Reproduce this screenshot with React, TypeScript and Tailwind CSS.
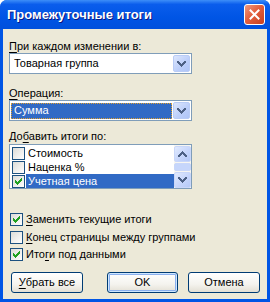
import type { ReactNode } from 'react'

const font = "font-['Liberation_Sans',Arial,sans-serif]"

function Chevron({ up }: { up?: boolean }) {
  return (
    <svg width="9" height="6" viewBox="0 0 9 6" className={up ? 'rotate-180' : ''} shapeRendering="crispEdges">
      <path d="M0 0h2v1h1v1h1v1h1V2h1V1h1V0h2v2H8v1H7v1H6v1H5v1H4V5H3V4H2V3H1V2H0z" fill="#4D6185" />
    </svg>
  )
}

function DropBtn() {
  return (
    <div className="flex h-full w-[17px] items-center justify-center rounded-[2px] border border-[#B9CCF6] bg-[linear-gradient(135deg,#DCE6FD,#BBCEFA_60%,#AFC5F7)]">
      <Chevron />
    </div>
  )
}

function Combo({ text, selected }: { text: string; selected?: boolean }) {
  return (
    <div className="flex h-[21px] w-[183px] border border-[#7F9DB9] bg-white p-[1px]">
      <div className="flex flex-1 items-center pr-[1px]">
        {selected ? (
          <div className="flex h-[16px] flex-1 items-center border border-dotted border-[#E0A030] bg-[#316AC5] pl-[2px] text-white">
            {text}
          </div>
        ) : (
          <div className="pl-[3px]">{text}</div>
        )}
      </div>
      <DropBtn />
    </div>
  )
}

function Check({ on }: { on?: boolean }) {
  return (
    <div className="flex h-[13px] w-[13px] shrink-0 items-center justify-center border border-[#1C5180] bg-[linear-gradient(135deg,#DCDCD7,#FFFFFF)]">
      {on && (
        <svg width="7" height="7" viewBox="0 0 7 7" shapeRendering="crispEdges">
          <path d="M0 2h1v1h1v1h1V3h1V2h1V1h1V0h1v3H6v1H5v1H4v1H3v1H2V6H1V5H0z" fill="#21A121" />
        </svg>
      )}
    </div>
  )
}

function Key({ children }: { children: ReactNode }) {
  return <span className="underline underline-offset-[2px]">{children}</span>
}

function Btn({ children, def, w }: { children: ReactNode; def?: boolean; w: string }) {
  return (
    <div
      className={`flex h-[21px] ${w} items-center justify-center rounded-[3px] border border-[#003C74] bg-[linear-gradient(to_bottom,#FFFFFF,#F4F3EE_60%,#E3DFD4)] ${
        def ? 'shadow-[inset_0_0_0_1px_#CEE7FF,inset_0_0_0_2px_#8BB0EE]' : ''
      }`}
    >
      {children}
    </div>
  )
}

function ListRow({ text, on, selected }: { text: string; on?: boolean; selected?: boolean }) {
  return (
    <div className="flex h-[14px] items-center pl-[2px]">
      <Check on={on} />
      <div className={`ml-[1px] flex h-full flex-1 items-center pl-[2px] ${selected ? 'bg-[#316AC5] text-white' : ''}`}>{text}</div>
    </div>
  )
}

function ScrollBtn({ up }: { up?: boolean }) {
  return (
    <div className="flex h-[16px] w-[17px] items-center justify-center rounded-[2px] border border-[#C9D7F9] bg-[linear-gradient(135deg,#E1EAFE,#C4D4FB_60%,#B5C9F7)]">
      <Chevron up={up} />
    </div>
  )
}

export default function App() {
  return (
    <div className={`flex h-[302px] w-[270px] flex-col overflow-hidden rounded-t-[7px] bg-[#0055E5] ${font}`}>
      {/* Title bar */}
      <div className="flex h-[29px] shrink-0 items-center justify-between bg-[linear-gradient(to_bottom,#3D8EF8,#0A5DEC_15%,#0055E5_60%,#0050DC)] pl-[7px] pr-[5px]">
        <span className="text-[13px] font-bold text-white [text-shadow:1px_1px_#0A1883]">Промежуточные итоги</span>
        <div className="flex h-[21px] w-[21px] items-center justify-center rounded-[3px] border border-white bg-[linear-gradient(135deg,#F09A80,#E35F3E_45%,#C7401F)]">
          <svg width="11" height="11" viewBox="0 0 11 11">
            <path d="M1.5 1.5l8 8M9.5 1.5l-8 8" stroke="white" strokeWidth="2" strokeLinecap="square" />
          </svg>
        </div>
      </div>

      {/* Body */}
      <div className="mx-[3px] mb-[3px] flex flex-1 flex-col bg-[#ECE9D8] px-[6px] pt-[11px] text-[11px] leading-[13px] text-black">
        <div>
          <Key>П</Key>ри каждом изменении в:
        </div>
        <Combo text="Товарная группа" />

        <div className="mt-[13px]">
          <Key>О</Key>перация:
        </div>
        <Combo text="Сумма" selected />

        <div className="mt-[9px]">
          До<Key>б</Key>авить итоги по:
        </div>
        <div className="mt-[1px] flex h-[45px] w-[183px] border border-[#7F9DB9] bg-white">
          <div className="flex-1 pt-[1px]">
            <ListRow text="Стоимость" />
            <ListRow text="Наценка %" />
            <ListRow text="Учетная цена" on selected />
          </div>
          <div className="flex w-[17px] flex-col bg-[#F7F6F1] pt-[1px]">
            <ScrollBtn up />
            <div className="mt-[1px] h-[8px] rounded-[2px] border border-[#C9D7F9] bg-[#C6D6FB]" />
            <div className="mt-[1px]">
              <ScrollBtn />
            </div>
          </div>
        </div>

        <div className="ml-[1px] mt-[24px] flex items-center gap-[3px]">
          <Check on />
          <span>
            <Key>З</Key>аменить текущие итоги
          </span>
        </div>
        <div className="ml-[1px] mt-[5px] flex items-center gap-[3px]">
          <Check />
          <span>
            <Key>К</Key>онец страницы между группами
          </span>
        </div>
        <div className="ml-[1px] mt-[4px] flex items-center gap-[3px]">
          <Check on />
          <span>
            Ито<Key>г</Key>и под данными
          </span>
        </div>

        <div className="ml-[2px] mt-[11px] flex">
          <Btn w="w-[72px]">
            <Key>У</Key>брать все
          </Btn>
          <div className="ml-[24px]">
            <Btn w="w-[71px]" def>
              OK
            </Btn>
          </div>
          <div className="ml-[10px]">
            <Btn w="w-[72px]">Отмена</Btn>
          </div>
        </div>
      </div>
    </div>
  )
}
